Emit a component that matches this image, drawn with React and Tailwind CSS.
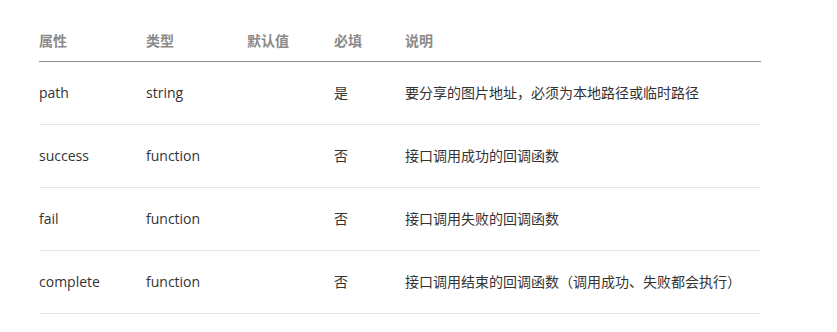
const columns = ['属性', '类型', '默认值', '必填', '说明'];

const rows = [
  { name: 'path', type: 'string', def: '', required: '是', desc: '要分享的图片地址，必须为本地路径或临时路径' },
  { name: 'success', type: 'function', def: '', required: '否', desc: '接口调用成功的回调函数' },
  { name: 'fail', type: 'function', def: '', required: '否', desc: '接口调用失败的回调函数' },
  { name: 'complete', type: 'function', def: '', required: '否', desc: '接口调用结束的回调函数（调用成功、失败都会执行）' },
];

export default function App() {
  return (
    <div
      className="w-[837px] h-[332px] bg-white pt-[21px] pl-[39px]"
      style={{ fontFamily: '"Open Sans", "Noto Sans CJK SC", sans-serif' }}
    >
      <div className="w-[722px]">
        <div className="grid grid-cols-[107px_101px_87px_71px_1fr] h-[41px] items-center border-b border-[#8c8c8c] text-sm font-bold text-[#8a8a8a]">
          {columns.map((c) => (
            <div key={c}>{c}</div>
          ))}
        </div>
        {rows.map((r) => (
          <div
            key={r.name}
            className="grid grid-cols-[107px_101px_87px_71px_1fr] h-[63px] items-center border-b border-[#e6e6e6] text-sm text-[#333]"
          >
            <div>{r.name}</div>
            <div>{r.type}</div>
            <div>{r.def}</div>
            <div>{r.required}</div>
            <div>{r.desc}</div>
          </div>
        ))}
      </div>
    </div>
  );
}
